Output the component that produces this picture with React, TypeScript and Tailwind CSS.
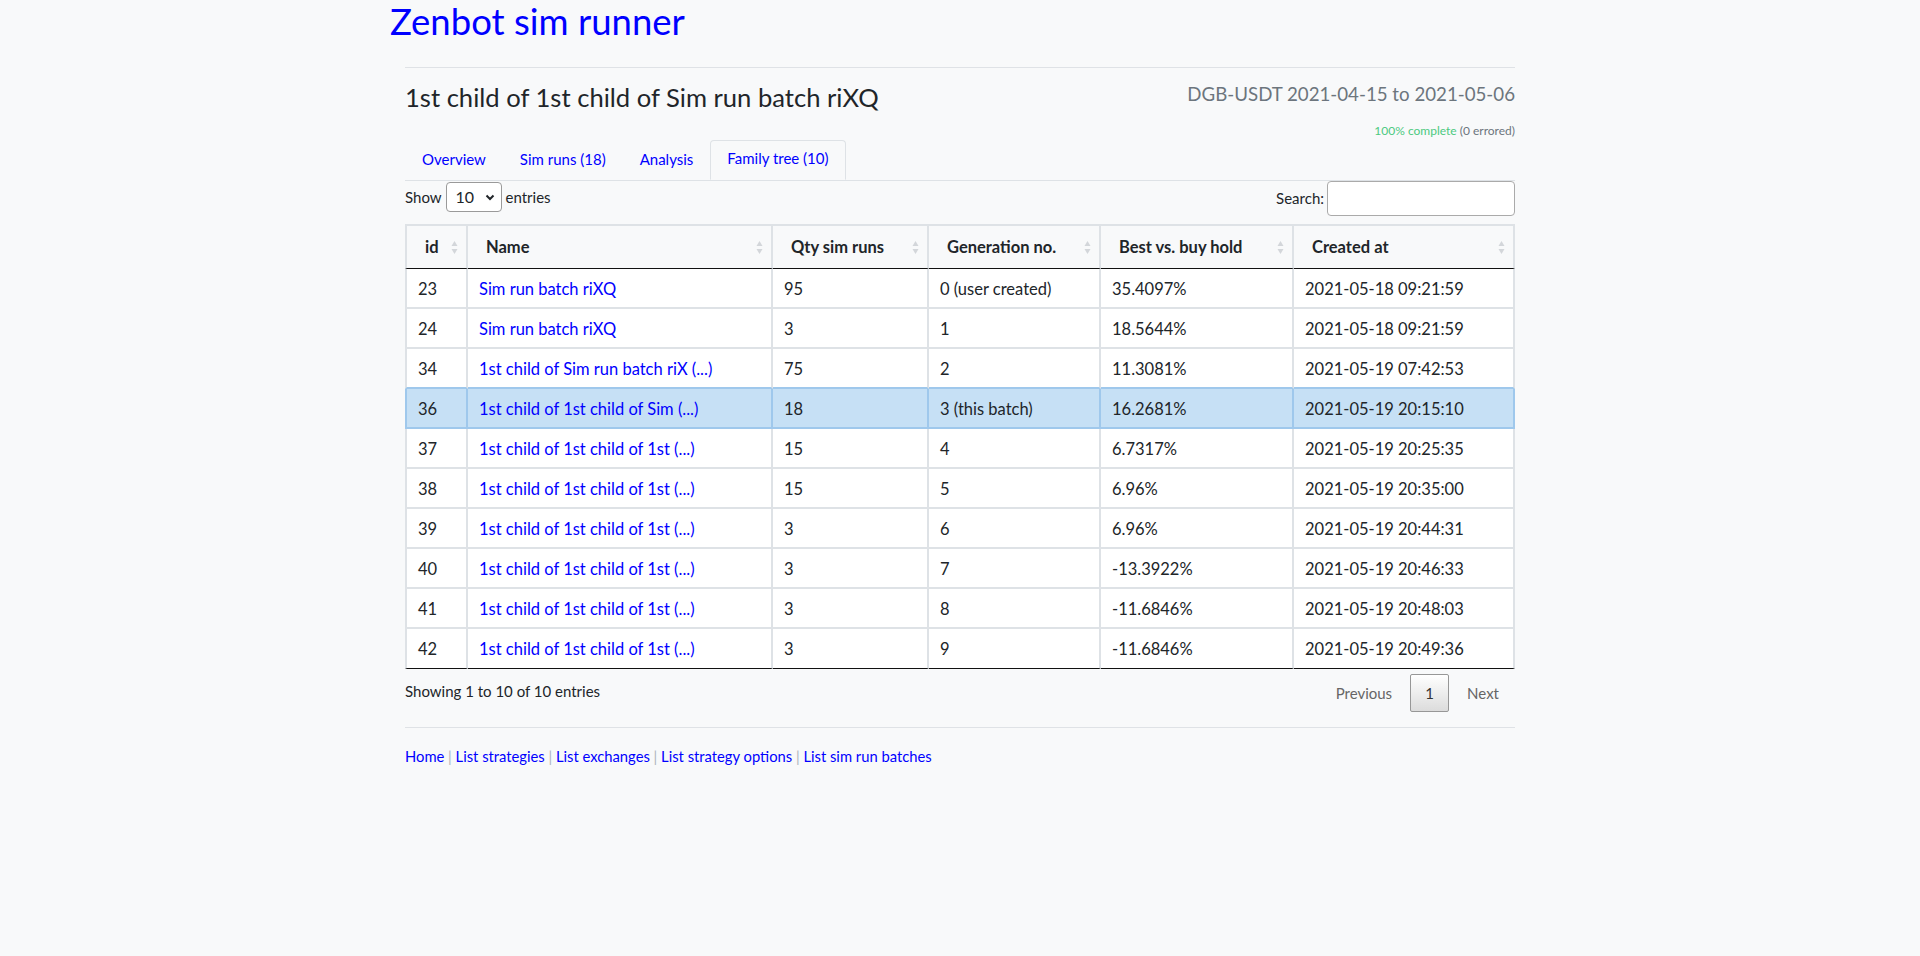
import React from "react";

const font = { fontFamily: "Lato, 'Open Sans', 'Liberation Sans', sans-serif" };

const tabs = ["Overview", "Sim runs (18)", "Analysis", "Family tree (10)"];

const cols = [
  { label: "id", w: "w-[63px]" },
  { label: "Name", w: "w-[305px]" },
  { label: "Qty sim runs", w: "w-[156px]" },
  { label: "Generation no.", w: "w-[172px]" },
  { label: "Best vs. buy hold", w: "w-[193px]" },
  { label: "Created at", w: "w-[221px]" },
];

const rows = [
  ["23", "Sim run batch riXQ", "95", "0 (user created)", "35.4097%", "2021-05-18 09:21:59"],
  ["24", "Sim run batch riXQ", "3", "1", "18.5644%", "2021-05-18 09:21:59"],
  ["34", "1st child of Sim run batch riX (...)", "75", "2", "11.3081%", "2021-05-19 07:42:53"],
  ["36", "1st child of 1st child of Sim (...)", "18", "3 (this batch)", "16.2681%", "2021-05-19 20:15:10"],
  ["37", "1st child of 1st child of 1st (...)", "15", "4", "6.7317%", "2021-05-19 20:25:35"],
  ["38", "1st child of 1st child of 1st (...)", "15", "5", "6.96%", "2021-05-19 20:35:00"],
  ["39", "1st child of 1st child of 1st (...)", "3", "6", "6.96%", "2021-05-19 20:44:31"],
  ["40", "1st child of 1st child of 1st (...)", "3", "7", "-13.3922%", "2021-05-19 20:46:33"],
  ["41", "1st child of 1st child of 1st (...)", "3", "8", "-11.6846%", "2021-05-19 20:48:03"],
  ["42", "1st child of 1st child of 1st (...)", "3", "9", "-11.6846%", "2021-05-19 20:49:36"],
];

const HIGHLIGHT = 3;

function SortIcon() {
  return (
    <svg width="7" height="15" viewBox="0 0 7 15" className="shrink-0">
      <path d="M3.5 1 L6.5 6 L0.5 6 Z" fill="#d3d6da" />
      <path d="M3.5 14 L6.5 9 L0.5 9 Z" fill="#d3d6da" />
    </svg>
  );
}

function Chevron() {
  return (
    <svg width="10" height="7" viewBox="0 0 10 7">
      <path d="M1.5 1.5 L5 5 L8.5 1.5" stroke="#212529" strokeWidth="2" fill="none" />
    </svg>
  );
}

export default function App() {
  const links = ["Home", "List strategies", "List exchanges", "List strategy options", "List sim run batches"];

  return (
    <div className="min-h-[956px] bg-[#f8f9fa] text-[#212529]" style={font}>
      <div className="w-[1140px] mx-auto">
        <h1 className="h-[67px] text-[36.5px] leading-[42px] text-[#0000ff] font-normal">
          Zenbot sim runner
        </h1>
        <div className="px-[15px]">
          <div className="border-t border-[#dfe2e6]" />

          <div className="h-[73px] flex justify-between">
            <h3 className="mt-[14px] text-[25.6px] leading-[30px] font-normal">
              1st child of 1st child of Sim run batch riXQ
            </h3>
            <div className="flex flex-col items-end">
              <div className="mt-[14px] text-[18.7px] leading-[24px] text-[#6c757d]">
                DGB-USDT 2021-04-15 to 2021-05-06
              </div>
              <div className="mt-[17px] text-[12px] leading-[16px]">
                <span className="text-[#4cc97f]">100% complete</span>{" "}
                <span className="text-[#6c757d]">(0 errored)</span>
              </div>
            </div>
          </div>

          <div className="flex items-end border-b border-[#dee2e6] h-[40px]">
            {tabs.map((t, i) => (
              <div
                key={t}
                className={
                  i === 3
                    ? "px-[16px] h-[40px] pt-[5px] leading-[24px] text-[15px] text-[#0000ff] border border-[#dee2e6] border-b-[#f8f9fa] rounded-t-[4px] bg-[#f8f9fa]"
                    : "px-[17px] h-[39px] pt-[6px] leading-[24px] text-[15px] text-[#0000ff]"
                }
              >
                {t}
              </div>
            ))}
          </div>

          <div className="h-[43px] flex justify-between items-start text-[15px]">
            <div className="flex items-center gap-[4px] mt-[1px]">
              <span>Show</span>
              <div className="w-[56px] h-[30px] bg-white border border-[#9a9a9a] rounded-[4px] flex items-center justify-between pl-[9px] pr-[6px]">
                <span className="text-[16px]">10</span>
                <Chevron />
              </div>
              <span>entries</span>
            </div>
            <div className="flex items-center gap-[3px] h-[35px]">
              <span>Search:</span>
              <div className="w-[188px] h-[35px] bg-white border border-[#aaa] rounded-[4px]" />
            </div>
          </div>

          <table className="border-separate border-spacing-0 table-fixed w-[1110px] text-[16.5px]">
            <thead>
              <tr>
                {cols.map((c, i) => (
                  <th
                    key={c.label}
                    className={`${c.w} h-[45px] border-t-2 border-r-2 ${
                      i === 0 ? "border-l-2" : ""
                    } border-[#dee2e6] border-b-[#111] border-b text-left font-bold pl-[18px] pr-[8px]`}
                  >
                    <div className="flex items-center justify-between">
                      <span>{c.label}</span>
                      <SortIcon />
                    </div>
                  </th>
                ))}
              </tr>
            </thead>
            <tbody>
              {rows.map((r, ri) => {
                const hl = ri === HIGHLIGHT;
                const beforeHl = ri === HIGHLIGHT - 1;
                const last = ri === rows.length - 1;
                return (
                  <tr key={ri} className={hl ? "bg-[#c6e0f5]" : "bg-white"}>
                    {r.map((cell, ci) => (
                      <td
                        key={ci}
                        className={`h-[40px] px-[11px] pt-[2px] border-r-2 ${ci === 0 ? "border-l-2" : ""} ${
                          hl ? "border-[#9fc8ec]" : "border-[#dee2e6]"
                        } ${
                          last
                            ? "border-b border-b-[#111]"
                            : beforeHl
                            ? "border-b-2 border-b-[#9fc8ec]"
                            : "border-b-2"
                        }`}
                      >
                        {ci === 1 ? <span className="text-[#0000ff]">{cell}</span> : cell}
                      </td>
                    ))}
                  </tr>
                );
              })}
            </tbody>
          </table>

          <div className="h-[58px] flex justify-between items-start text-[15px]">
            <div className="mt-[12px] leading-[20px]">Showing 1 to 10 of 10 entries</div>
            <div className="flex items-center mt-[5px]">
              <span className="px-[16px] text-[#666]">Previous</span>
              <div className="ml-[2px] w-[39px] h-[38px] border border-[#979797] rounded-[2px] bg-gradient-to-b from-white to-[#dcdcdc] flex items-center justify-center text-[#333]">
                1
              </div>
              <span className="ml-[2px] px-[16px] text-[#666]">Next</span>
            </div>
          </div>

          <div className="border-t border-[#dfe2e6]" />

          <div className="pt-[18px] text-[14.75px] leading-[20px]">
            {links.map((l, i) => (
              <React.Fragment key={l}>
                {i > 0 && <span className="text-[#adb5bd]"> | </span>}
                <span className="text-[#0000ff]">{l}</span>
              </React.Fragment>
            ))}
          </div>
        </div>
      </div>
    </div>
  );
}
